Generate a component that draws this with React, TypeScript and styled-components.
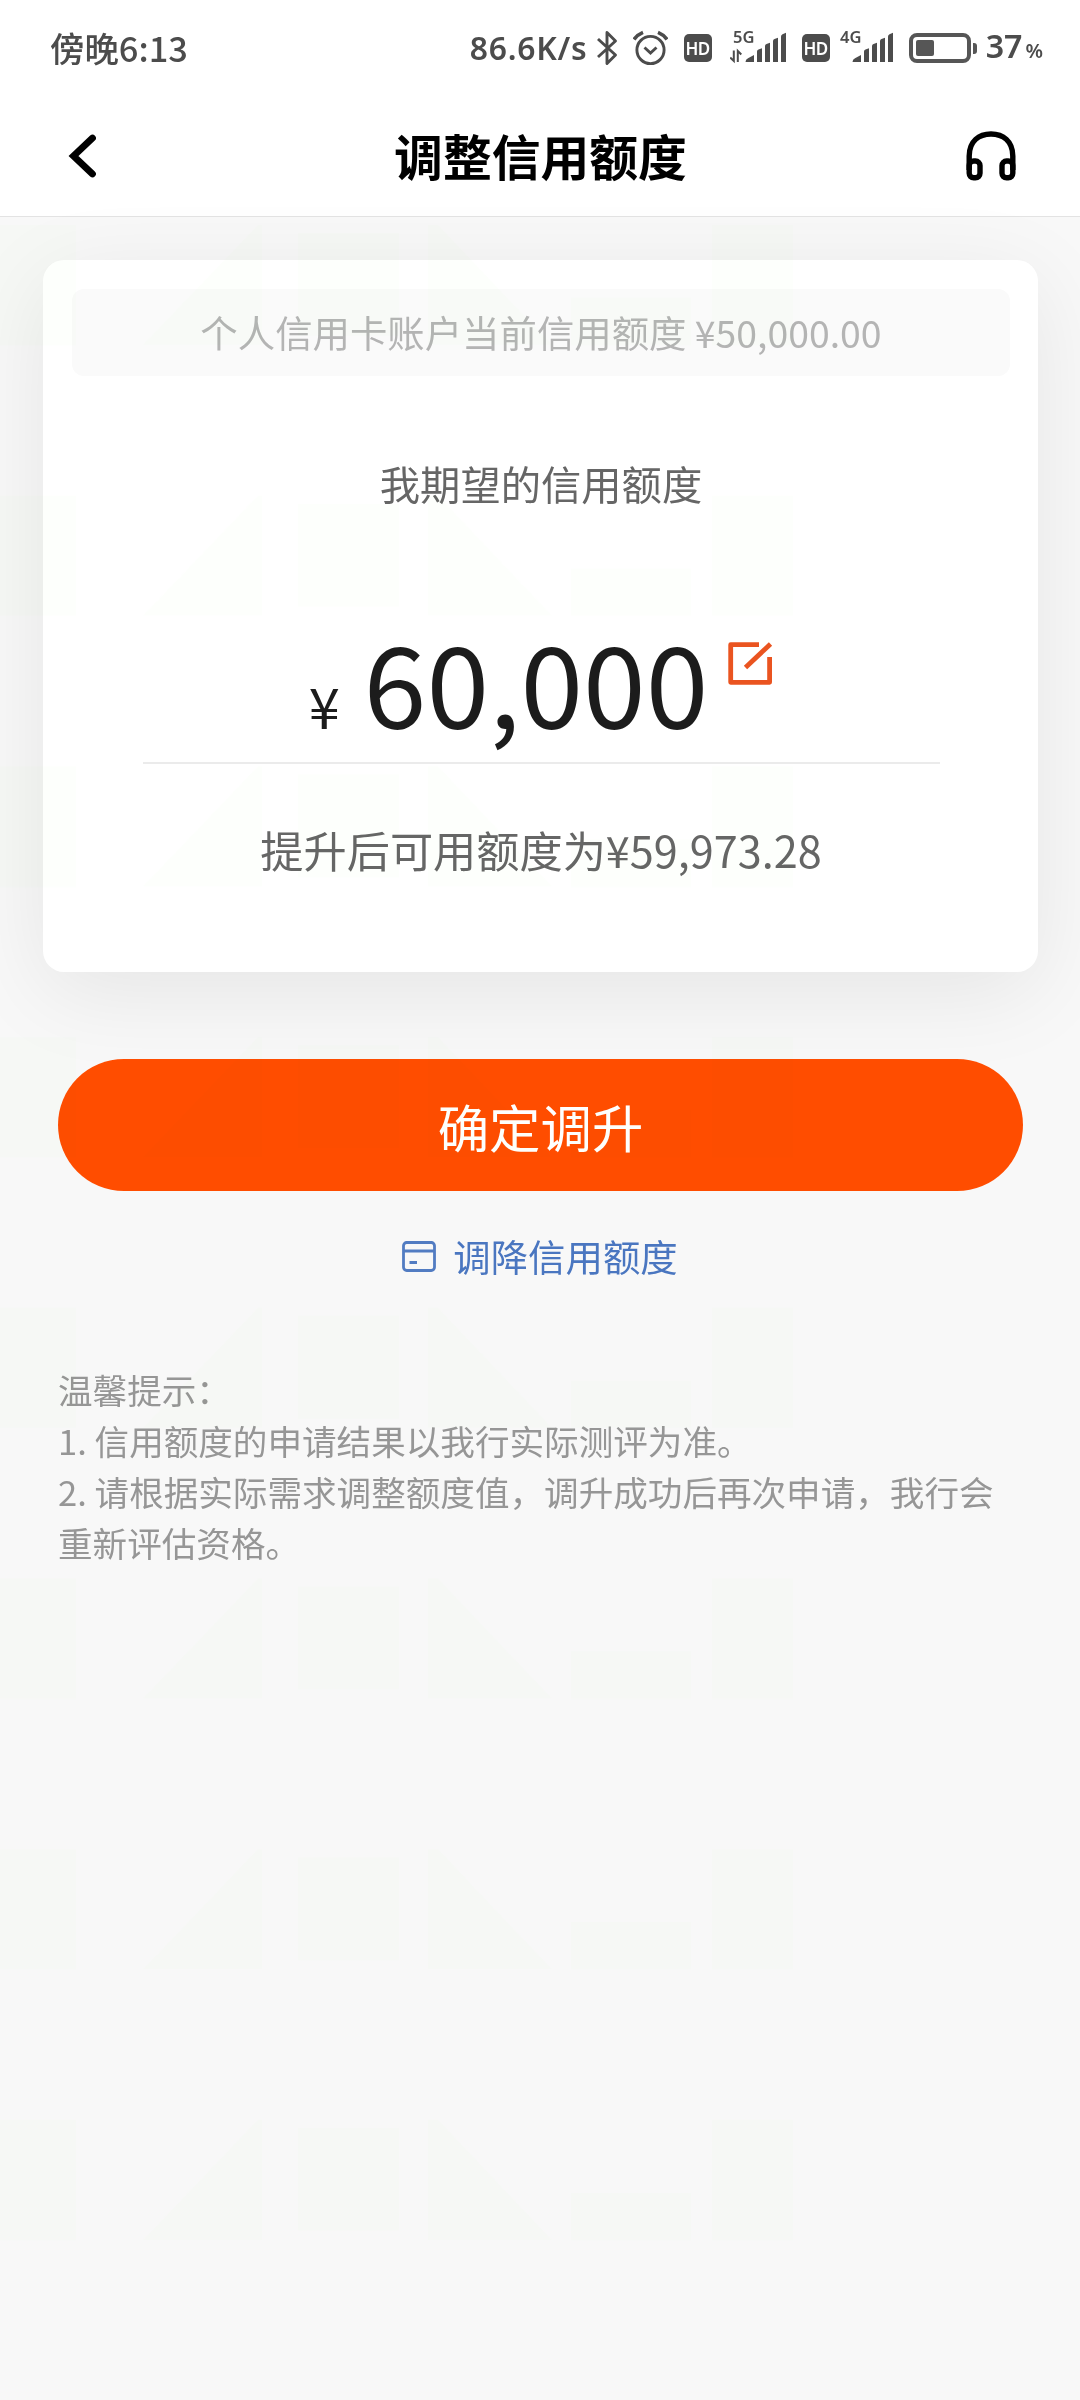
import React from "react";
import styled, { createGlobalStyle } from "styled-components";

const cjk = `"Noto Sans CJK SC", "Noto Sans", sans-serif`;
const ink = "#4c4c4c";

const GlobalStyle = createGlobalStyle`
  * { box-sizing: border-box; }
  body { margin: 0; background: #f8f8f8; font-family: ${cjk}; }
  svg { display: block; flex: none; }
  button { font-family: inherit; border: 0; padding: 0; background: none; cursor: pointer; }
`;

const Screen = styled.div`
  width: 1080px;
  height: 2400px;
  overflow: hidden;
  background: #f8f8f8;
`;

const StatusBar = styled.div`
  height: 96px;
  padding: 0 37px 0 50px;
  display: flex;
  justify-content: space-between;
  align-items: center;
  background: #fff;
  color: ${ink};
`;

const Clock = styled.span`
  font-size: 34.4px;
  line-height: 94px;
  height: 96px;
  font-weight: 500;
`;

const StatusIcons = styled.div`
  display: flex;
  align-items: center;
  height: 96px;
`;

const Speed = styled.span`
  width: 120px;
  margin-right: 7px;
  font: 600 31.8px/96px "Noto Sans", sans-serif;
  letter-spacing: 0.8px;
  white-space: nowrap;
`;

const Gap = styled.span<{ $w: number }>`
  flex: none;
  width: ${(p) => p.$w}px;
`;

const HdBadge = styled.span`
  flex: none;
  width: 28px;
  height: 28px;
  border-radius: 5px;
  background: ${ink};
  color: #fff;
  text-align: center;
  font: 600 17px/30px "Noto Sans", sans-serif;
  letter-spacing: -0.5px;
`;

const BatteryShell = styled.span`
  flex: none;
  width: 62px;
  height: 30px;
  border: 4px solid #565656;
  border-radius: 8px;
  padding: 3px;
`;

const BatteryLevel = styled.span`
  display: block;
  width: 18px;
  height: 16px;
  border-radius: 2px;
  background: #565656;
`;

const BatteryNub = styled.span`
  flex: none;
  width: 4px;
  height: 11px;
  margin-left: 2px;
  border-radius: 0 3px 3px 0;
  background: #565656;
`;

const Percent = styled.span`
  margin-left: 9px;
  display: flex;
  align-items: baseline;
  font: 600 32.2px/96px "Noto Sans", sans-serif;
`;

const PercentSign = styled.span`
  margin-left: 3px;
  font-size: 20px;
  font-weight: 600;
`;

const Header = styled.header`
  height: 121px;
  padding: 0 64px 0 58px;
  display: flex;
  justify-content: space-between;
  align-items: center;
  background: #fff;
  border-bottom: 1px solid #e3e3e3;
`;

const Title = styled.h1`
  margin: 0 0 0 7px;
  font-size: 48.8px;
  line-height: 118px;
  height: 120px;
  font-weight: 700;
  color: #000;
`;

const IconButton = styled.button`
  display: flex;
  width: 50px;
  height: 120px;
  align-items: center;
  justify-content: center;
`;

const Body = styled.main`
  position: relative;
  height: 2183px;
  display: flow-root;
`;

const Watermark = styled.svg`
  position: absolute;
  inset: 0;
  pointer-events: none;
  mix-blend-mode: multiply;
`;

const Card = styled.section`
  margin: 43px 42px 0 43px;
  height: 712px;
  padding: 29px 28px 0 29px;
  border-radius: 21px;
  background: #fff;
  box-shadow: 0 20px 90px rgba(0, 0, 0, 0.08);
  display: flex;
  flex-direction: column;
  align-items: center;
`;

const CurrentLimit = styled.div`
  width: 100%;
  height: 87px;
  border-radius: 12px;
  background: #fafafa;
  color: #b4b4b4;
  font-size: 37.4px;
  line-height: 87px;
  text-align: center;
`;

const WishLabel = styled.div`
  margin-top: 67px;
  height: 80px;
  font-size: 40.3px;
  line-height: 80px;
  color: #666;
`;

const AmountRow = styled.div`
  width: 797px;
  height: 241px;
  padding-top: 73px;
  display: flex;
  justify-content: center;
  align-items: baseline;
  line-height: 168px;
  border-bottom: 2px solid #ebebeb;
  color: #1c1c1c;
`;

const Currency = styled.span`
  font-size: 56px;
`;

const Amount = styled.span`
  margin-left: 24px;
  font-size: 112.8px;
`;

const EditButton = styled.button`
  align-self: flex-start;
  margin: 46px 0 0 20px;
`;

const AfterLabel = styled.div`
  margin-top: 45px;
  height: 80px;
  font-size: 43.2px;
  line-height: 80px;
  color: #666;
`;

const ConfirmButton = styled.button`
  display: block;
  width: 965px;
  height: 132px;
  padding-top: 2px;
  margin: 87px 0 0 58px;
  border-radius: 66px;
  background: #ff4d00;
  color: #fff;
  font-size: 51.4px;
  line-height: 130px;
`;

const LowerLink = styled.button`
  width: 1080px;
  height: 60px;
  margin-top: 35px;
  display: flex;
  justify-content: center;
  align-items: center;
  gap: 17px;
  color: #4a76c0;
  font-size: 37.4px;
  line-height: 60px;
`;

const Tips = styled.div`
  margin: 78px 57px 0 58px;
  font-size: 34.6px;
  line-height: 51px;
  color: #969696;
`;

const TipLine = styled.p`
  margin: 0;
`;

const Bluetooth = () => (
  <svg width="21" height="36" viewBox="0 0 21 36" fill="none" stroke={ink} strokeWidth="2.9" strokeLinejoin="round">
    <path d="M1 9 L18.5 25 L10 33.5 V2.5 L18.5 11 L1 27" />
  </svg>
);

const Alarm = () => (
  <svg width="35" height="36" viewBox="0 0 35 36" fill="none" stroke={ink} strokeWidth="2.9">
    <circle cx="17.5" cy="20" r="13.6" />
    <path d="M11.5 17.5 L17.5 23 L23.5 17.5" />
    <path d="M1 9.5 Q4.5 4.5 10 2.3 M34 9.5 Q30.5 4.5 25 2.3" strokeWidth="3.6" />
  </svg>
);

const Signal = ({ label, arrows }: { label: string; arrows?: boolean }) => (
  <svg width="56" height="52" viewBox="0 -8 56 52" fill={ink}>
    <text
      x="3"
      y="12.6"
      fontSize="15.4"
      fontWeight="600"
      fontFamily="Noto Sans"
      textLength="21.5"
      lengthAdjust="spacingAndGlyphs"
    >
      {label}
    </text>
    {arrows && (
      <path d="M0.2 27.5 L3.8 31 V20.5 M7.8 32 V21 L11.3 24.5" fill="none" stroke={ink} strokeWidth="2" />
    )}
    <path d="M15.5 32 Q15.5 29.5 18 28.3 L24 25 V32 Z" />
    <path d="M27 32 V21.5 Q27 20 28.5 19.5 L32 18.3 V32 Z" />
    <path d="M35 32 V16 Q35 14.5 36.5 14 L40 12.8 V32 Z" />
    <path d="M43 32 V11 Q43 9.5 44.5 9 L48 7.8 V32 Z" />
    <path d="M51 32 V6.5 Q51 5 52.5 4.3 L56 2.8 V32 Z" />
  </svg>
);

const Back = () => (
  <svg width="30" height="46" viewBox="0 0 30 46" fill="none" stroke="#000" strokeWidth="6.8" strokeLinecap="round">
    <path d="M24.5 5 L5.5 23 L24.5 41" strokeLinejoin="miter" />
  </svg>
);

const Headphones = () => (
  <svg width="50" height="50" viewBox="0 0 50 50" fill="none" stroke="#000" strokeWidth="5.4">
    <path d="M3.2 39 V25 C3.2 10 13 3 25 3 S46.8 10 46.8 25 V39" />
    <rect x="3.2" y="30" width="10.8" height="16.8" rx="4.5" />
    <rect x="36" y="30" width="10.8" height="16.8" rx="4.5" />
  </svg>
);

const Edit = () => (
  <svg width="45" height="44" viewBox="0 0 45 44" fill="none" stroke="#ea5420" strokeWidth="4.8">
    <path d="M31 2.7 H2.7 V40.3 H41.6 V15" strokeLinejoin="round" />
    <path d="M17.5 25.5 L42.5 2" />
  </svg>
);

const CardIcon = () => (
  <svg width="34" height="31" viewBox="0 0 34 31" fill="none" stroke="#527cc2" strokeWidth="2.8">
    <rect x="1.5" y="1.5" width="31" height="28" rx="3.2" />
    <path d="M1 10 H32 M7.5 21.5 H15" />
  </svg>
);

const BackdropPattern = () => (
  <Watermark width="1080" height="2183" viewBox="0 0 1080 2183">
    <defs>
      <pattern id="marks" x="0" y="8" width="1080" height="270.7" patternUnits="userSpaceOnUse">
        <g fill="rgb(190,255,150)" fillOpacity="0.03">
          <rect x="0" y="0" width="76" height="120" />
          <path d="M143 120 L258 0 H262 V120 Z" />
          <rect x="298" y="8" width="101" height="103" />
          <path d="M428 0 H438 L552 120 H428 Z" />
          <rect x="571" y="73" width="120" height="47" />
          <rect x="712" y="0" width="81" height="120" />
        </g>
      </pattern>
    </defs>
    <rect y="8" width="1080" height="2020" fill="url(#marks)" />
  </Watermark>
);

export default function App() {
  return (
    <Screen>
      <GlobalStyle />
      <StatusBar>
        <Clock>傍晚6:13</Clock>
        <StatusIcons>
          <Speed>86.6K/s</Speed>
          <Bluetooth />
          <Gap $w={15} />
          <Alarm />
          <Gap $w={16} />
          <HdBadge>HD</HdBadge>
          <Gap $w={18} />
          <Signal label="5G" arrows />
          <Gap $w={16} />
          <HdBadge>HD</HdBadge>
          <Gap $w={7} />
          <Signal label="4G" />
          <Gap $w={16} />
          <BatteryShell>
            <BatteryLevel />
          </BatteryShell>
          <BatteryNub />
          <Percent>
            37<PercentSign>%</PercentSign>
          </Percent>
        </StatusIcons>
      </StatusBar>
      <Header>
        <IconButton aria-label="返回">
          <Back />
        </IconButton>
        <Title>调整信用额度</Title>
        <IconButton aria-label="客服">
          <Headphones />
        </IconButton>
      </Header>
      <Body>
        <Card>
          <CurrentLimit>个人信用卡账户当前信用额度 ¥50,000.00</CurrentLimit>
          <WishLabel>我期望的信用额度</WishLabel>
          <AmountRow>
            <Currency>¥</Currency>
            <Amount>60,000</Amount>
            <EditButton aria-label="编辑">
              <Edit />
            </EditButton>
          </AmountRow>
          <AfterLabel>提升后可用额度为¥59,973.28</AfterLabel>
        </Card>
        <ConfirmButton>确定调升</ConfirmButton>
        <LowerLink>
          <CardIcon />
          调降信用额度
        </LowerLink>
        <Tips>
          <TipLine>温馨提示：</TipLine>
          <TipLine>1. 信用额度的申请结果以我行实际测评为准。</TipLine>
          <TipLine>2. 请根据实际需求调整额度值，调升成功后再次申请，我行会重新评估资格。</TipLine>
        </Tips>
        <BackdropPattern />
      </Body>
    </Screen>
  );
}
